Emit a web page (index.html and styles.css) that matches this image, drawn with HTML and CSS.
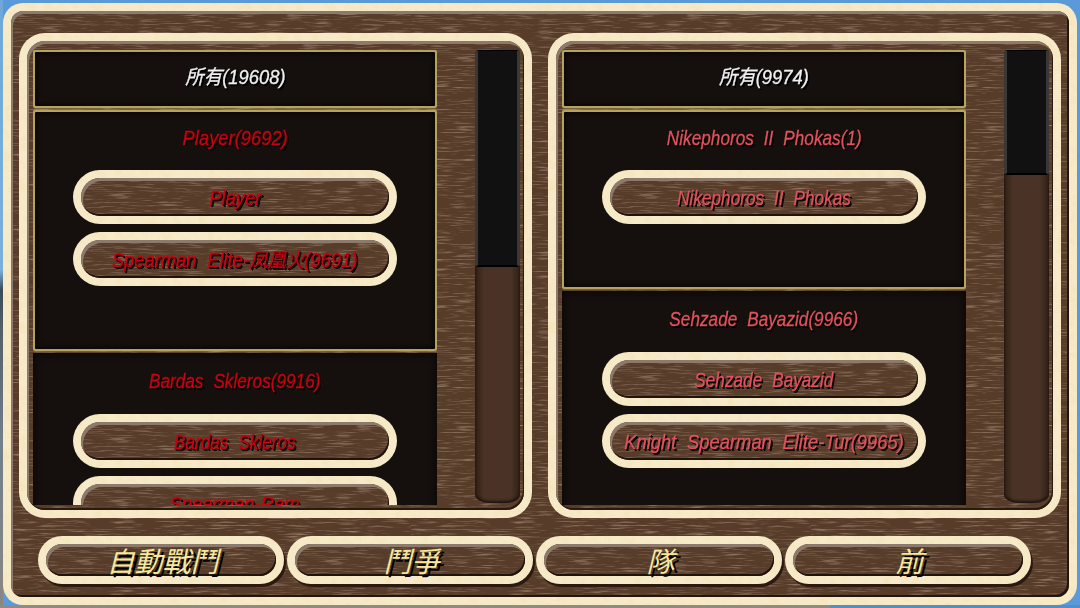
FILE: index.html
```html
<!DOCTYPE html>
<html lang="zh-Hant">
<head>
<meta charset="utf-8">
<title>Battle list</title>
<link rel="stylesheet" href="styles.css">
</head>
<body>
<main class="frame">
  <div class="panels">
    <section class="panel">
      <div class="list">
        <div class="row head selected"><span class="t white">所有(19608)</span></div>
        <div class="row group selected">
          <div class="title"><span class="t red">Player(9692)</span></div>
          <div class="item"><span class="t red">Player</span></div>
          <div class="item"><span class="t red">Spearman Elite-凤凰火(9691)</span></div>
        </div>
        <div class="row group">
          <div class="title"><span class="t tight red">Bardas Skleros(9916)</span></div>
          <div class="item"><span class="t tight red">Bardas Skleros</span></div>
          <div class="item"><span class="t red">Spearman-Ram</span></div>
        </div>
      </div>
      <div class="scroll"><div class="thumb thumb-left"></div></div>
    </section>
    <section class="panel">
      <div class="list">
        <div class="row head selected"><span class="t white">所有(9974)</span></div>
        <div class="row group selected">
          <div class="title"><span class="t tight pink">Nikephoros II Phokas(1)</span></div>
          <div class="item"><span class="t tight pink">Nikephoros II Phokas</span></div>
        </div>
        <div class="row group">
          <div class="title"><span class="t tight pink">Sehzade Bayazid(9966)</span></div>
          <div class="item"><span class="t tight pink">Sehzade Bayazid</span></div>
          <div class="item"><span class="t pink">Knight Spearman Elite-Tur(9965)</span></div>
        </div>
      </div>
      <div class="scroll"><div class="thumb thumb-right"></div></div>
    </section>
  </div>
  <nav class="actions">
    <button class="action">自動戰鬥</button>
    <button class="action">鬥爭</button>
    <button class="action">隊</button>
    <button class="action">前</button>
  </nav>
</main>
</body>
</html>
```
FILE: styles.css
```css
:root {
  --grain: url("data:image/svg+xml,%3Csvg xmlns='http://www.w3.org/2000/svg' width='400' height='300'%3E%3Cfilter id='n'%3E%3CfeTurbulence type='fractalNoise' baseFrequency='0.04 0.7' numOctaves='3' seed='4'/%3E%3CfeColorMatrix values='0 0 0 0 0.6 0 0 0 0 0.45 0 0 0 0 0.33 0 0 0 1.4 -0.72'/%3E%3C/filter%3E%3Crect width='400' height='300' filter='url(%23n)'/%3E%3C/svg%3E");
  --mottle: url("data:image/svg+xml,%3Csvg xmlns='http://www.w3.org/2000/svg' width='300' height='300'%3E%3Cfilter id='m'%3E%3CfeTurbulence type='fractalNoise' baseFrequency='0.12' numOctaves='3' seed='9'/%3E%3CfeColorMatrix values='0 0 0 0 0.92 0 0 0 0 0.78 0 0 0 0 0.5 0 0 0 2.4 -1.05'/%3E%3C/filter%3E%3Crect width='300' height='300' filter='url(%23m)'/%3E%3C/svg%3E");
  --leather: var(--grain) padding-box, linear-gradient(#573c2a, #573c2a) padding-box, var(--mottle) border-box, linear-gradient(#f6eac8, #f6eac8) border-box;
}

* { box-sizing: border-box; }

html, body { margin: 0; height: 100%; }

body {
  width: 1080px;
  height: 608px;
  overflow: hidden;
  padding: 3px;
  background:
    linear-gradient(90deg, #8f8a84 0, #8f8a84 830px, #4e8fd0 830px) bottom / 100% 3px no-repeat,
    linear-gradient(180deg, #6fa8d8 0, #79b0dc 270px, #3c4a58 290px, #54606a 330px, #6f7f8c 440px, #8b8782 608px) left / 3px 100% no-repeat,
    #5b9ad8;
}

.frame {
  width: 1074px;
  height: 602px;
  padding: 22px 8px 0;
  border: 8px solid transparent;
  border-radius: 20px;
  background: var(--leather);
  box-shadow: inset 2px 3px 0 #8c7b6c, inset -2px -2px 0 #23160e;
}

.panels {
  display: flex;
  gap: 16px;
}

.panel {
  display: flex;
  width: 513px;
  height: 485px;
  padding: 9px 4px 5px 6px;
  border: 8px solid transparent;
  border-radius: 26px;
  background: var(--leather);
  box-shadow: inset 2px 3px 0 #8c7b6c, inset -1px -2px 0 #2a1a10;
}

.list {
  display: flex;
  flex-direction: column;
  gap: 2px;
  width: 404px;
  height: 455px;
  overflow: hidden;
}

.row {
  flex: none;
  background: #15100d;
  box-shadow: inset 0 0 8px #060403;
}

.selected {
  border: 2px solid #b4a45e;
  border-radius: 3px;
  box-shadow: inset 0 0 6px #000, 0 0 2px #c8b878;
}

.head {
  display: flex;
  align-items: center;
  justify-content: center;
  height: 58px;
  padding-bottom: 4px;
}

.group {
  padding: 0 40px 57px;
}

.group.selected {
  padding: 0 38px 55px;
}

.title {
  display: flex;
  align-items: center;
  justify-content: center;
  height: 52px;
  margin-bottom: 6px;
}

.group:not(.selected) .title {
  height: 56px;
  margin-bottom: 5px;
}

.item {
  display: flex;
  align-items: center;
  justify-content: center;
  height: 54px;
  margin-bottom: 8px;
  padding-top: 1px;
  border: 8px solid transparent;
  border-radius: 27px;
  background: var(--leather);
  box-shadow: inset 2px 3px 0 #8c7b6c, inset -1px -2px 0 #20130b;
}

.t {
  display: inline-block;
  font: italic 400 20px/1 "Liberation Sans", "Noto Sans CJK TC", sans-serif;
  word-spacing: 6px;
  white-space: nowrap;
  -webkit-text-stroke: 0.3px currentColor;
  text-shadow: 2px 2px 0 #000, 1px 1px 0 #000;
  transform: scaleX(0.92);
}

.tight { transform: scaleX(0.86); }

.white { color: #f0f0f0; }
.red { color: #cc0010; }
.pink { color: #e4525c; }

.scroll {
  width: 45px;
  height: 453px;
  margin-left: 38px;
  border-radius: 4px 4px 14px 14px / 4px 4px 9px 9px;
  background: linear-gradient(90deg, #2f1f16, #4a3326 20%, #4a3326 80%, #2f1f16);
  box-shadow: inset 0 -2px 3px #1d120b;
  overflow: hidden;
}

.thumb {
  background: #111111;
  border: solid #3a3836;
  border-width: 1px 3px 2px;
  border-top-color: #000;
  border-bottom-color: #000;
  border-radius: 3px;
}

.thumb-left { height: 217px; }
.thumb-right { height: 125px; }

.actions {
  display: grid;
  grid-template-columns: repeat(4, 246px);
  gap: 3px;
  margin: 18px 0 0 19px;
}

.action {
  height: 48px;
  padding: 0 0 0 3px;
  border: 8px solid transparent;
  border-radius: 24px;
  background: var(--leather);
  box-shadow: inset 2px 3px 0 #8c7b6c, inset -1px -2px 0 #20130b, 2px 3px 0 #2a1a10;
  color: #f6e99e;
  font: italic 400 28px/1 "Noto Sans CJK TC", sans-serif;
  text-shadow: 3px 3px 0 #000;
}
```
